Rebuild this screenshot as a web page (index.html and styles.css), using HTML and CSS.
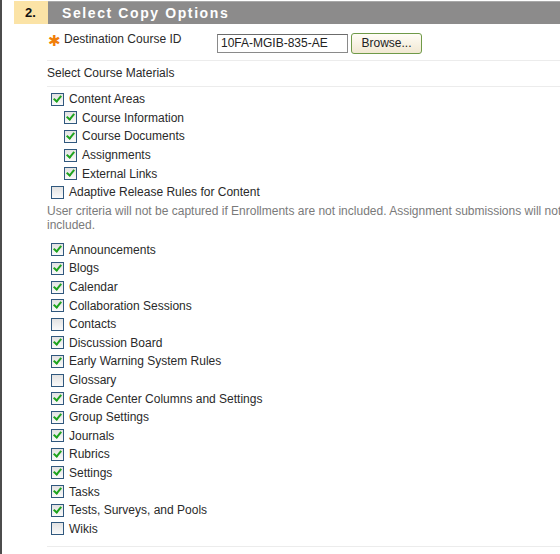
FILE: index.html
```html
<!DOCTYPE html>
<html>
<head>
<meta charset="utf-8">
<link rel="stylesheet" href="styles.css">
</head>
<body>
<div class="page">
  <div class="step-head">
    <div class="step-num">2.</div>
    <div class="step-title">Select Copy Options</div>
  </div>
  <div class="content">
    <div class="field-row">
      <span class="req">&#x2731;</span>
      <span class="label">Destination Course ID</span>
      <span class="input">10FA-MGIB-835-AE</span>
      <span class="btn">Browse...</span>
    </div>
    <div class="section-row">Select Course Materials</div>
    <div class="list top">
      <div class="item"><span class="cb on"></span>Content Areas</div>
      <div class="item sub"><span class="cb on"></span>Course Information</div>
      <div class="item sub"><span class="cb on"></span>Course Documents</div>
      <div class="item sub"><span class="cb on"></span>Assignments</div>
      <div class="item sub"><span class="cb on"></span>External Links</div>
      <div class="item"><span class="cb"></span>Adaptive Release Rules for Content</div>
    </div>
    <div class="note">User criteria will not be captured if Enrollments are not included. Assignment submissions will not be included.</div>
    <div class="list">
      <div class="item"><span class="cb on"></span>Announcements</div>
      <div class="item"><span class="cb on"></span>Blogs</div>
      <div class="item"><span class="cb on"></span>Calendar</div>
      <div class="item"><span class="cb on"></span>Collaboration Sessions</div>
      <div class="item"><span class="cb"></span>Contacts</div>
      <div class="item"><span class="cb on"></span>Discussion Board</div>
      <div class="item"><span class="cb on"></span>Early Warning System Rules</div>
      <div class="item"><span class="cb"></span>Glossary</div>
      <div class="item"><span class="cb on"></span>Grade Center Columns and Settings</div>
      <div class="item"><span class="cb on"></span>Group Settings</div>
      <div class="item"><span class="cb on"></span>Journals</div>
      <div class="item"><span class="cb on"></span>Rubrics</div>
      <div class="item"><span class="cb on"></span>Settings</div>
      <div class="item"><span class="cb on"></span>Tasks</div>
      <div class="item"><span class="cb on"></span>Tests, Surveys, and Pools</div>
      <div class="item"><span class="cb"></span>Wikis</div>
    </div>
    <div class="bottom-rule"></div>
  </div>
</div>
</body>
</html>
```
FILE: styles.css
```css
html, body {
  margin: 0;
  padding: 0;
  background: #fff;
  overflow: hidden;
}
body {
  font-family: "Liberation Sans", Arial, sans-serif;
  font-size: 12px;
  color: #2a2a2a;
}
.page {
  width: 558px;
  height: 554px;
  border-left: 2px solid #4c4c4c;
}
.step-head {
  display: flex;
  height: 23px;
  margin-left: 12px;
  padding-top: 1px;
}
.step-num {
  width: 34px;
  background: #fbe3a6;
  font-weight: bold;
  font-size: 13px;
  color: #111;
  line-height: 23px;
  padding-left: 11px;
  box-sizing: border-box;
}
.step-title {
  flex: 1;
  background: #8c8b8b;
  border-top: 1px solid #a8a8a8;
  color: #fff;
  font-weight: bold;
  font-size: 14px;
  letter-spacing: 1.6px;
  line-height: 22px;
  padding-left: 14px;
}
.content {
  padding-left: 45px;
}
.field-row {
  display: flex;
  align-items: center;
  height: 36px;
  border-bottom: 1px solid #ececec;
}
.req {
  color: #f07f0a;
  font-size: 15px;
  width: 16px;
  margin-left: 1px;
  line-height: 1;
  position: relative;
  top: -2px;
}
.label {
  width: 153px;
  position: relative;
  top: -3px;
}
.input {
  width: 126px;
  height: 17px;
  border: 1px solid #8a8a8a;
  border-top-color: #6b6b6b;
  line-height: 17px;
  padding-left: 3px;
  color: #222;
  box-sizing: content-box;
  position: relative;
  top: 1px;
}
.btn {
  margin-left: 3px;
  width: 69px;
  height: 19px;
  border: 1px solid #6f9a48;
  border-radius: 3px;
  background: linear-gradient(#fffdf6, #f1e8d2);
  text-align: center;
  line-height: 19px;
  color: #222;
  position: relative;
  top: 1px;
}
.section-row {
  height: 25px;
  line-height: 25px;
  border-bottom: 1px solid #ececec;
}
.list.top {
  padding-top: 3px;
}
.item {
  display: flex;
  align-items: center;
  height: 18.6px;
  padding-left: 4px;
}
.item.sub {
  padding-left: 17px;
}
.cb {
  width: 11px;
  height: 11px;
  border: 1px solid #30587e;
  background: linear-gradient(#e2e2e2, #fafafa);
  margin-right: 5px;
  flex: none;
  position: relative;
}
.cb.on::after {
  content: "";
  position: absolute;
  left: 3px;
  top: 0px;
  width: 3px;
  height: 6px;
  border-right: 2px solid #1ea31e;
  border-bottom: 2px solid #1ea31e;
  transform: rotate(40deg);
}
.note {
  width: 565px;
  color: #7a7a7a;
  line-height: 14px;
  padding-top: 2px;
  padding-bottom: 9px;
}
.bottom-rule {
  margin-top: 8px;
  height: 1px;
  background: #ececec;
}
```
